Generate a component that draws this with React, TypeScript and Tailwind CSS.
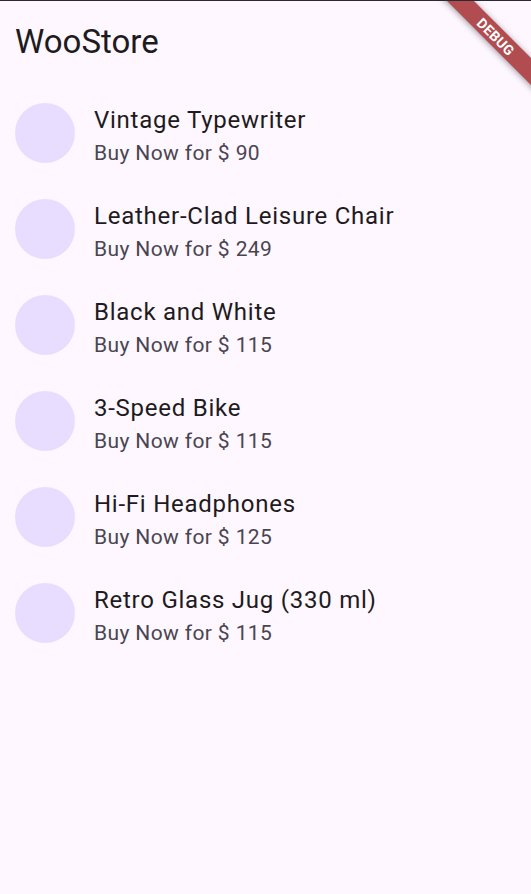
const products = [
  { name: "Vintage Typewriter", price: 90 },
  { name: "Leather-Clad Leisure Chair", price: 249 },
  { name: "Black and White", price: 115 },
  { name: "3-Speed Bike", price: 115 },
  { name: "Hi-Fi Headphones", price: 125 },
  { name: "Retro Glass Jug (330 ml)", price: 115 },
];

function DebugBanner() {
  return (
    <div className="pointer-events-none absolute right-0 top-0 h-[120px] w-[120px] overflow-hidden">
      <div className="absolute left-[15px] top-[26px] flex h-[19px] w-[140px] rotate-45 items-center justify-center bg-[#b14d50] shadow-[0_1px_6px_rgba(0,0,0,0.4)]">
        <span className="text-[14px] font-bold leading-none tracking-[0.3px] text-white">DEBUG</span>
      </div>
    </div>
  );
}

export default function App() {
  return (
    <div
      className="relative min-h-[894px] w-full border-t border-[#2b2a2e] bg-[#fef7ff]"
      style={{ fontFamily: "Roboto, 'Noto Sans', sans-serif" }}
    >
      <header className="flex h-[84px] items-center px-[15px] pb-[4px]">
        <h1 className="text-[33px] leading-none text-[#1d1b20]">WooStore</h1>
      </header>

      <ul>
        {products.map((p) => (
          <li key={p.name} className="flex h-[96px] items-center pl-[15px]">
            <div className="h-[60px] w-[60px] shrink-0 rounded-full bg-[#e9ddff]" />
            <div className="pl-[19px]">
              <p className="text-[24px] leading-[40px] tracking-[0.75px] text-[#1d1b20]">{p.name}</p>
              <p className="text-[21px] leading-[26px] tracking-[0.375px] text-[#49454f]">
                Buy Now for $ {p.price}
              </p>
            </div>
          </li>
        ))}
      </ul>

      <DebugBanner />
    </div>
  );
}
